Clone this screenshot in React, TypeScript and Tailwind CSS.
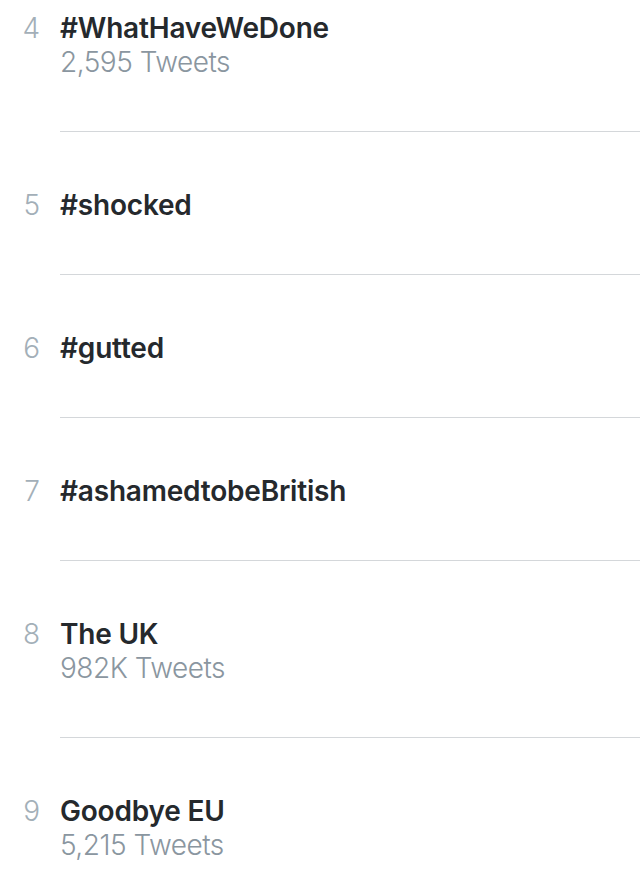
const trends = [
  { rank: 4, name: "#WhatHaveWeDone", count: "2,595 Tweets" },
  { rank: 5, name: "#shocked" },
  { rank: 6, name: "#gutted" },
  { rank: 7, name: "#ashamedtobeBritish" },
  { rank: 8, name: "The UK", count: "982K Tweets" },
  { rank: 9, name: "Goodbye EU", count: "5,215 Tweets" },
];

export default function App() {
  return (
    <div
      className="w-[640px] h-[875px] overflow-hidden bg-white"
      style={{ fontFamily: "Inter, 'Noto Sans', sans-serif" }}
    >
      {trends.map((t, i) => (
        <div key={t.rank} className="flex">
          <div
            className={`w-[60px] shrink-0 pr-[20px] text-right text-[28px] leading-[34px] font-light text-[#a3afb8] ${
              i === 0 ? "pt-[11px]" : "pt-[56px]"
            }`}
          >
            {t.rank}
          </div>
          <div
            className={`flex-1 border-b border-[#d4d7da] pb-[52px] ${
              i === 0 ? "pt-[11px]" : "pt-[56px]"
            }`}
          >
            <div className="text-[28px] leading-[34px] font-semibold text-[#25292d] tracking-[-0.2px]">
              {t.name}
            </div>
            {t.count && (
              <div className="text-[28px] leading-[34px] font-light text-[#8a96a0] tracking-[-0.5px]">
                {t.count}
              </div>
            )}
          </div>
        </div>
      ))}
    </div>
  );
}
